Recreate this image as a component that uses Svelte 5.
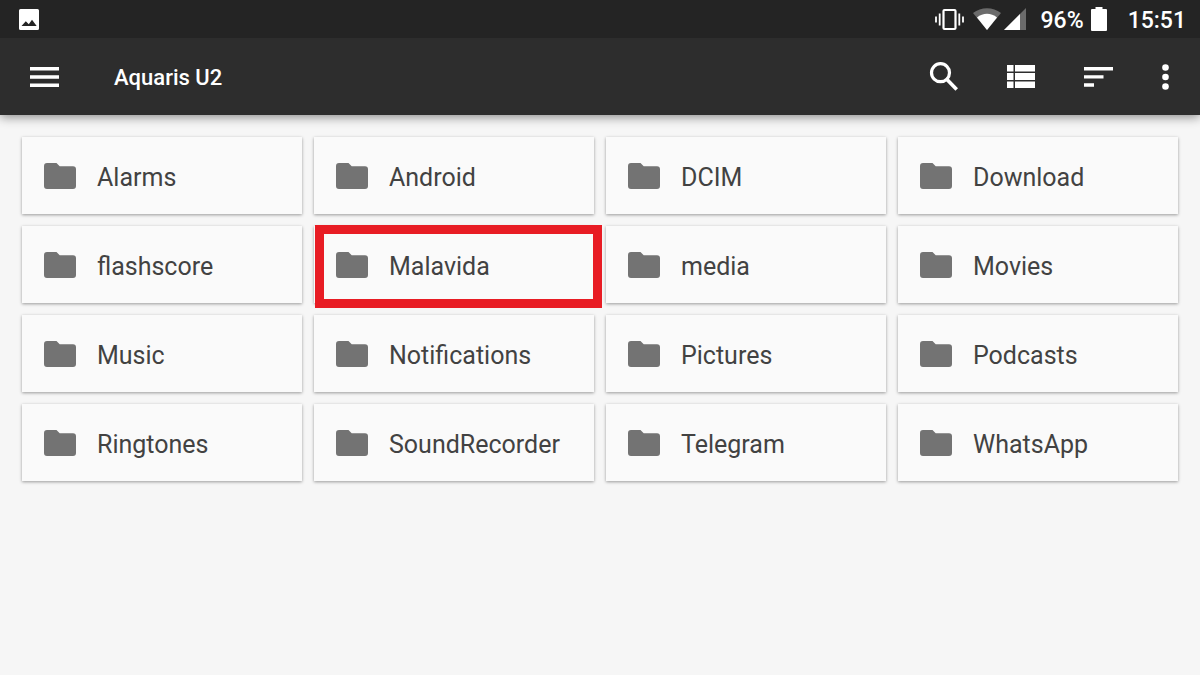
<script>
  const folders = [
    "Alarms", "Android", "DCIM", "Download",
    "flashscore", "Malavida", "media", "Movies",
    "Music", "Notifications", "Pictures", "Podcasts",
    "Ringtones", "SoundRecorder", "Telegram", "WhatsApp"
  ];

  let selected = $state("Malavida");
</script>

<header>
  <div class="status-bar">
    <svg width="20" height="21" viewBox="0 0 20 21" fill="#fff">
      <path fill-rule="evenodd" d="M1.500 0h17a1.500 1.500 0 0 1 1.500 1.500v18a1.500 1.500 0 0 1-1.500 1.500h-17a1.500 1.500 0 0 1-1.500-1.500v-18a1.500 1.500 0 0 1 1.500-1.500zM2.500 17h15.200l-4.700-6.200-3.200 4.400-3-3z" />
    </svg>

    <div class="status-icons">
      <svg class="vibrate" width="29" height="23" viewBox="0 0 29 23" fill="none" stroke="#fff">
        <rect x="8.500" y="2" width="12" height="19" rx="1" stroke-width="2.200" />
        <path d="M1 8.500v6M4.700 5.500v12M28 8.500v6M24.300 5.500v12" stroke-width="1.800" />
      </svg>
      <svg class="wifi" width="28" height="22" viewBox="0 0 28 22">
        <path d="M0 5C8-1.500 20-1.500 28 5L14 22z" fill="#6b6b6b" />
        <path d="M4 9.500C10 4.500 18 4.500 24 9.500L14 22z" fill="#fff" />
      </svg>
      <svg class="signal" width="22" height="22" viewBox="0 0 22 22">
        <path d="M22 0v22H0z" fill="#6b6b6b" />
        <path d="M16 6v16H0z" fill="#fff" />
      </svg>
      <span>96%</span>
      <svg class="battery" width="16" height="24" viewBox="0 0 16 24" fill="#fff">
        <path d="M4.500 0h7v2H15q1 0 1 1v20q0 1-1 1H1q-1 0-1-1V3q0-1 1-1h3.500z" />
      </svg>
      <time>15:51</time>
    </div>
  </div>

  <div class="toolbar">
    <button aria-label="Open menu">
      <svg width="29" height="20" viewBox="0 0 29 20" fill="#fff">
        <path d="M0 0h29v3.400H0zM0 8.300h29v3.400H0zM0 16.600h29V20H0z" />
      </svg>
    </button>
    <h1>Aquaris U2</h1>
    <div class="actions">
      <button aria-label="Search">
        <svg width="29" height="29" viewBox="0 0 29 29" fill="none" stroke="#fff">
          <circle cx="11.500" cy="10.700" r="9" stroke-width="3.200" />
          <path d="M17.500 17l10.200 10.500" stroke-width="3.600" />
        </svg>
      </button>
      <button aria-label="List view">
        <svg width="28" height="23" viewBox="0 0 28 23" fill="#fff">
          <path d="M0 0h6.500v6.500H0zM8 0h20v6.500H8zM0 8h6.500v7H0zM8 8h20v7H8zM0 16.500h6.500V23H0zM8 16.500h20V23H8z" />
        </svg>
      </button>
      <button aria-label="Sort">
        <svg width="29" height="20" viewBox="0 0 29 20" fill="#fff">
          <path d="M0 0h29v3.500H0zM0 8.200h19.500v3.400H0zM0 16.300h10v3.400H0z" />
        </svg>
      </button>
      <button aria-label="More options">
        <svg width="7" height="26" viewBox="0 0 7 26" fill="#fff">
          <circle cx="3.500" cy="3.500" r="3.300" />
          <circle cx="3.500" cy="13" r="3.300" />
          <circle cx="3.500" cy="22.500" r="3.300" />
        </svg>
      </button>
    </div>
  </div>
</header>

<main>
  {#each folders as folder}
    <button class="folder" class:selected={folder === selected} onclick={() => (selected = folder)}>
      <svg width="32" height="26" viewBox="0 0 32 26" fill="#737373">
        <path d="M3 0h9.500l3.200 3.200H29a3 3 0 0 1 3 3V23a3 3 0 0 1-3 3H3a3 3 0 0 1-3-3V3a3 3 0 0 1 3-3z" />
      </svg>
      <span>{folder}</span>
    </button>
  {/each}
</main>

<style>
  :global(body) {
    margin: 0;
    background: #f6f6f6;
    font-family: Roboto, sans-serif;
  }

  svg {
    display: block;
    flex-shrink: 0;
  }

  button {
    padding: 0;
    border: 0;
    background: none;
    font: inherit;
    cursor: pointer;
  }

  header {
    background: #2d2d2d;
    color: #fff;
    box-shadow: 0 2px 10px rgba(0, 0, 0, 0.45);
  }

  .status-bar {
    display: flex;
    align-items: center;
    justify-content: space-between;
    height: 38px;
    padding: 0 14px 0 19px;
    background: #242424;
    font-size: 23px;
    font-weight: 500;
  }

  .status-icons {
    display: flex;
    align-items: center;
  }

  .status-icons span,
  .status-icons time {
    padding-top: 2px;
  }

  .vibrate {
    margin-right: 9px;
  }

  .wifi {
    margin-right: 3px;
  }

  .signal {
    margin-right: 15px;
  }

  .battery {
    margin: 0 21px 0 7px;
  }

  .toolbar {
    display: flex;
    align-items: center;
    height: 77px;
    padding: 0 31px 0 30px;
  }

  h1 {
    margin: 0 0 0 55px;
    padding-top: 2px;
    font-size: 22px;
    font-weight: 500;
  }

  .actions {
    display: flex;
    align-items: center;
    gap: 49px;
    margin-left: auto;
  }

  main {
    display: grid;
    grid-template-columns: repeat(4, 1fr);
    gap: 12px;
    padding: 22px;
  }

  .folder {
    position: relative;
    display: flex;
    align-items: center;
    gap: 21px;
    height: 77px;
    padding: 0 22px;
    background: #fafafa;
    box-shadow: 0 1px 3px rgba(0, 0, 0, 0.38);
    color: #424242;
    font-size: 25px;
    text-align: left;
  }

  .folder span {
    padding-top: 4px;
  }

  /* red frame drawn over the card and its edges */
  .selected::after {
    content: "";
    position: absolute;
    inset: -1px -8px -5px 1px;
    border: 9px solid #e81c24;
  }
</style>
